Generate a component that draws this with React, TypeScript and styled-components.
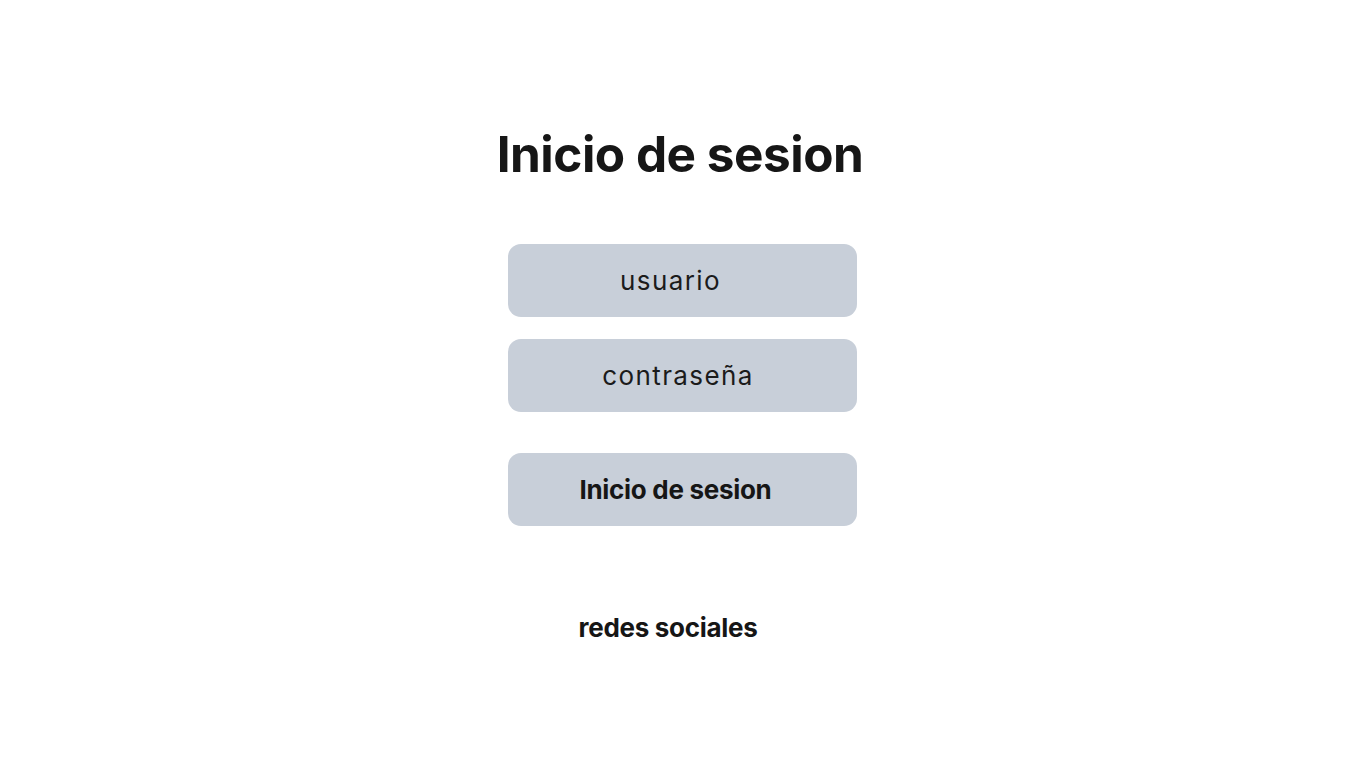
import React from 'react';
import styled, { createGlobalStyle } from 'styled-components';

const GlobalStyle = createGlobalStyle`
  html, body {
    margin: 0;
    padding: 0;
    background: #ffffff;
  }
  body {
    font-family: Inter, "Noto Sans", "Liberation Sans", sans-serif;
    color: #161616;
  }
`;

const Page = styled.main`
  width: 1366px;
  height: 768px;
  display: flex;
  flex-direction: column;
  align-items: center;
  padding-top: 122px;
  box-sizing: border-box;
`;

const Title = styled.h1`
  margin: 0 6px 0 0;
  font-size: 49.5px;
  font-weight: 700;
  letter-spacing: -0.5px;
  line-height: 64px;
`;

const Form = styled.form`
  display: flex;
  flex-direction: column;
  width: 349px;
  margin: 58px 1px 0 0;
`;

const Field = styled.div<{ $shift: number; $gap?: number }>`
  height: 73px;
  margin-top: ${(p) => p.$gap ?? 0}px;
  border-radius: 13px;
  background: #c8cfd9;
  display: flex;
  align-items: center;
  justify-content: center;
  padding-right: ${(p) => p.$shift}px;
  font-size: 26px;
  letter-spacing: 1.4px;
  color: #1b1b1b;
`;

const SubmitButton = styled.button`
  height: 73px;
  margin-top: 41px;
  border: none;
  border-radius: 13px;
  background: #c8cfd9;
  padding: 0 14px 0 0;
  font-family: inherit;
  font-size: 26px;
  font-weight: 700;
  letter-spacing: -0.3px;
  color: #161616;
  cursor: pointer;
`;

const Social = styled.p`
  margin: 86px 30px 0 0;
  font-size: 26px;
  font-weight: 700;
  letter-spacing: -0.3px;
`;

const App: React.FC = () => {
  return (
    <>
      <GlobalStyle />
      <Page>
        <Title>Inicio de sesion</Title>
        <Form onSubmit={(e) => e.preventDefault()}>
          <Field $shift={24}>usuario</Field>
          <Field $shift={9} $gap={22}>contraseña</Field>
          <SubmitButton type="submit">Inicio de sesion</SubmitButton>
        </Form>
        <Social>redes sociales</Social>
      </Page>
    </>
  );
};

export default App;
